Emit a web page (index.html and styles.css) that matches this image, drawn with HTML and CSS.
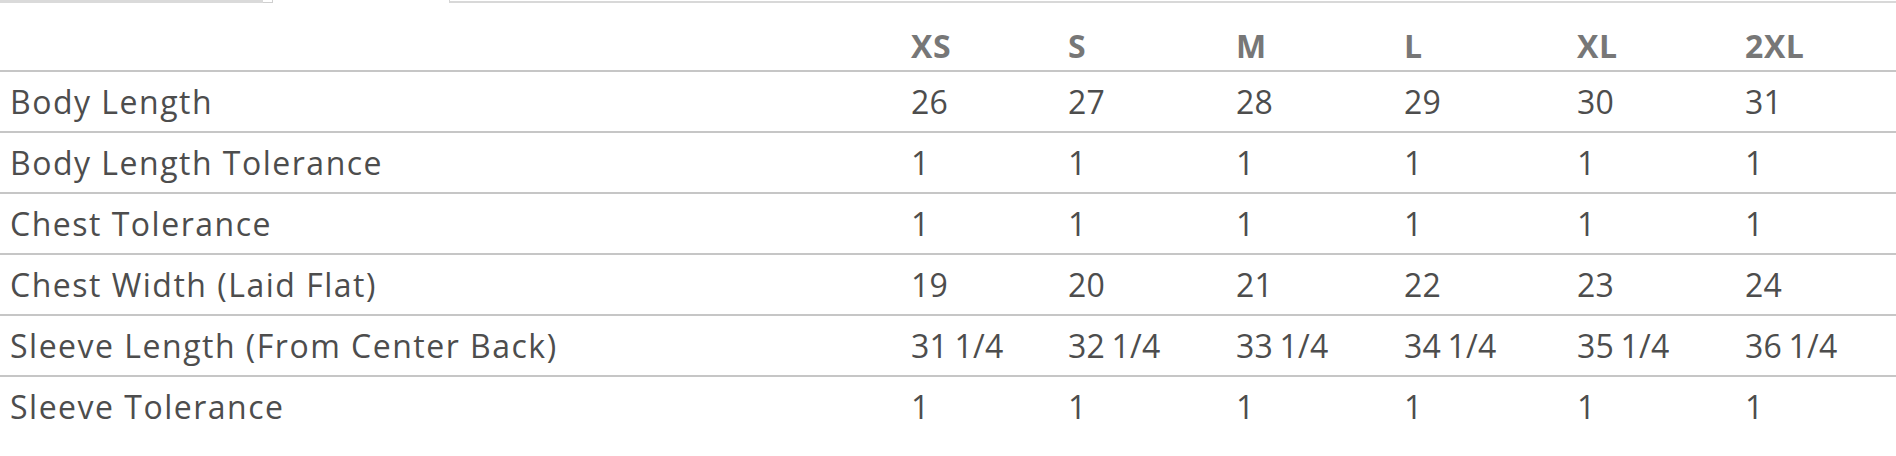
FILE: index.html
```html
<!DOCTYPE html>
<html lang="en">
<head>
<meta charset="utf-8">
<title>Size chart</title>
<link rel="stylesheet" href="styles.css">
</head>
<body>
<div class="tabs">
  <div class="tab tab-first"><span class="tab-fill"></span><span class="tab-corner"></span></div>
  <div class="tab-gap"></div>
  <div class="tab tab-last"></div>
</div>
<div class="chart">
  <div class="row head">
    <div class="cell label"></div>
    <div class="cell">XS</div><div class="cell">S</div><div class="cell">M</div><div class="cell">L</div><div class="cell">XL</div><div class="cell">2XL</div>
  </div>
  <div class="row">
    <div class="cell label">Body Length</div>
    <div class="cell">26</div><div class="cell">27</div><div class="cell">28</div><div class="cell">29</div><div class="cell">30</div><div class="cell">31</div>
  </div>
  <div class="row">
    <div class="cell label">Body Length Tolerance</div>
    <div class="cell">1</div><div class="cell">1</div><div class="cell">1</div><div class="cell">1</div><div class="cell">1</div><div class="cell">1</div>
  </div>
  <div class="row">
    <div class="cell label">Chest Tolerance</div>
    <div class="cell">1</div><div class="cell">1</div><div class="cell">1</div><div class="cell">1</div><div class="cell">1</div><div class="cell">1</div>
  </div>
  <div class="row">
    <div class="cell label">Chest Width (Laid Flat)</div>
    <div class="cell">19</div><div class="cell">20</div><div class="cell">21</div><div class="cell">22</div><div class="cell">23</div><div class="cell">24</div>
  </div>
  <div class="row">
    <div class="cell label">Sleeve Length (From Center Back)</div>
    <div class="cell">31 1/4</div><div class="cell">32 1/4</div><div class="cell">33 1/4</div><div class="cell">34 1/4</div><div class="cell">35 1/4</div><div class="cell">36 1/4</div>
  </div>
  <div class="row">
    <div class="cell label">Sleeve Tolerance</div>
    <div class="cell">1</div><div class="cell">1</div><div class="cell">1</div><div class="cell">1</div><div class="cell">1</div><div class="cell">1</div>
  </div>
</div>
</body>
</html>
```
FILE: styles.css
```css
html, body {
  margin: 0;
  padding: 0;
  background: #ffffff;
}
body {
  font-family: "Open Sans", "Liberation Sans", sans-serif;
  color: #4d4d4d;
}
.tabs {
  display: flex;
  height: 3px;
}
.tab-first {
  display: flex;
  width: 273px;
}
.tab-fill {
  width: 263px;
  height: 3px;
  background: #dadada;
}
.tab-corner {
  width: 9px;
  height: 2px;
  border-right: 1px solid #cfcfcf;
  border-bottom: 1px solid #cfcfcf;
}
.tab-gap {
  width: 176px;
}
.tab-last {
  flex: 1;
  height: 1px;
  border-left: 1px solid #d4d4d4;
  border-bottom: 2px solid #d8d8d8;
}
.chart {
  display: flex;
  flex-direction: column;
}
.row {
  display: grid;
  grid-template-columns: 901px 157px 168px 168px 173px 168px 1fr;
  height: 59px;
  border-top: 2px solid #c6c6c6;
  align-items: center;
}
.row.head {
  height: 49px;
  padding-top: 18px;
  border-top: 0;
}
.cell {
  padding-left: 10px;
  font-size: 32px;
  letter-spacing: 0.2px;
  word-spacing: -2px;
  line-height: 40px;
  white-space: nowrap;
}
.cell.label {
  letter-spacing: 1.5px;
  word-spacing: 0;
}
.head .cell {
  font-weight: 700;
  color: #777777;
  letter-spacing: 0.6px;
}
```
